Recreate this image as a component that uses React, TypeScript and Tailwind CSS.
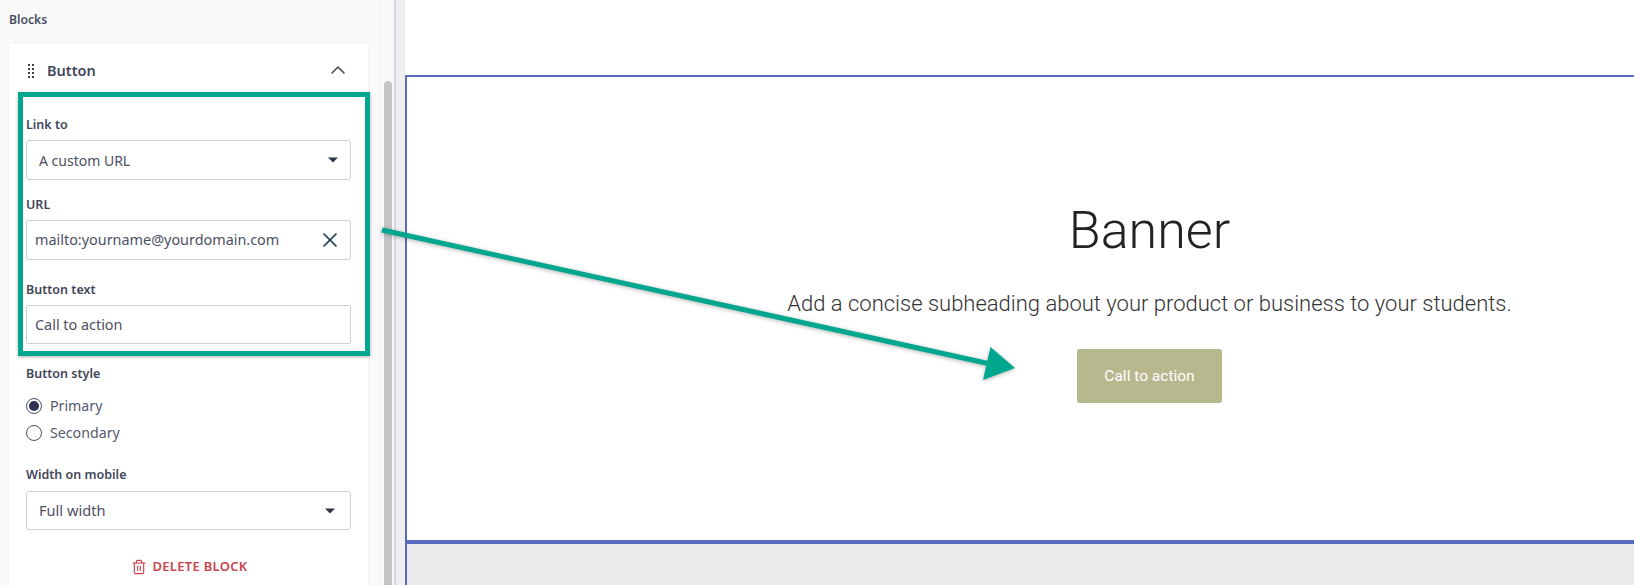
import React from "react";
import { ChevronUp, Trash2, X } from "lucide-react";

const Label = ({ children, className = "" }: { children: React.ReactNode; className?: string }) => (
  <div className={`h-5 text-[12.5px] leading-[20px] font-semibold text-[#42465a] ${className}`}>{children}</div>
);

const Caret = () => (
  <svg width="10" height="6" viewBox="0 0 10 6">
    <path d="M0 0.5h10L5 5.5z" fill="#2f3447" />
  </svg>
);

const SelectBox = ({ value, className = "" }: { value: string; className?: string }) => (
  <div className={`flex items-center justify-between pl-[12px] bg-white border border-[#cfd0d6] rounded-[3px] text-[#4c5062] ${className}`}>
    <span>{value}</span>
    <Caret />
  </div>
);

const Radio = ({ label, checked, className = "" }: { label: string; checked?: boolean; className?: string }) => (
  <div className={`flex items-center h-5 gap-[8px] text-[14.2px] text-[#55596b] ${className}`}>
    <span className="w-4 h-4 rounded-full border border-[#4b4f63] bg-white flex items-center justify-center">
      {checked && <span className="w-[10px] h-[10px] rounded-full bg-[#2f3352]" />}
    </span>
    {label}
  </div>
);

const DragHandle = () => (
  <div className="ml-[2px] grid grid-cols-2 gap-x-[2px] gap-y-[2px] w-[6px]">
    {[0, 1, 2, 3, 4, 5, 6, 7].map((i) => (
      <span key={i} className="w-[2px] h-[2px] bg-[#3a3e50]" />
    ))}
  </div>
);

export default function App() {
  return (
    <div className="relative flex w-[1634px] h-[585px] overflow-hidden bg-white font-['Noto_Sans',sans-serif]">
      {/* Sidebar */}
      <aside className="w-[381px] h-full shrink-0 bg-[#f9f9fa] border-r border-[#ecedf0] pl-[9px]">
        <div className="h-[44px] pt-[10px] text-[12.2px] leading-5 font-semibold text-[#4a4e60]">Blocks</div>
        <div className="w-[359px] h-[600px] bg-white rounded-[3px] shadow-[0_0_3px_rgba(0,0,0,0.06)] pl-[17px]">
          <div className="h-[54px] flex items-center">
            <DragHandle />
            <span className="ml-[13px] text-[14.5px] font-semibold text-[#42465a]">Button</span>
            <ChevronUp className="ml-auto mr-[18px] mb-[2px] w-6 h-6 text-[#3f4356]" strokeWidth={1.5} />
          </div>
          <div className="w-[325px]">
            <Label className="mt-[17px]">Link to</Label>
            <SelectBox value="A custom URL" className="mt-[5px] h-10 pr-[12px] text-[14px]" />
            <Label className="mt-[15px]">URL</Label>
            <div className="mt-[5px] h-10 flex items-center justify-between pl-[8px] pr-[8px] bg-white border border-[#cfd0d6] rounded-[2px] text-[14.4px] text-[#4c5062]">
              <span>mailto:yourname@yourdomain.com</span>
              <X className="w-6 h-6 text-[#1f3a4d]" strokeWidth={1.75} />
            </div>
            <Label className="mt-5">Button text</Label>
            <div className="mt-[5px] h-[39px] flex items-center pl-[8px] bg-white border border-[#cfd0d6] rounded-[2px] text-[14.4px] text-[#4c5062]">
              Call to action
            </div>
            <Label className="mt-5">Button style</Label>
            <Radio label="Primary" checked className="mt-[12px]" />
            <Radio label="Secondary" className="mt-[7px]" />
            <Label className="mt-[22px]">Width on mobile</Label>
            <SelectBox value="Full width" className="mt-[6px] h-[39px] pr-[15px] text-[14.6px]" />
            <div className="mt-[27px] h-5 flex items-center justify-center gap-[5px] pl-[2px] text-[13px] font-semibold tracking-[0.3px] text-[#c8454d]">
              <Trash2 className="w-4 h-4" strokeWidth={1.75} />
              DELETE BLOCK
            </div>
          </div>
        </div>
      </aside>

      {/* Scrollbar */}
      <div className="w-[15px] h-full shrink-0 bg-[#f9f9fa] border-r-2 border-[#d3d5df] pl-[3px] pt-[81px]">
        <div className="w-2 h-full bg-[#c4c4c4] rounded-t-[4px]" />
      </div>

      <div className="w-[9px] h-full shrink-0 bg-[#f0f0f2]" />

      {/* Canvas, wider than the window: its right edge is cut off */}
      <main className="w-[1487px] shrink-0 flex flex-col">
        <div className="h-[75px] bg-white" />
        <section className="h-[469px] bg-white border-t-2 border-l-2 border-b-4 border-[#5b6bbd] flex flex-col items-center font-['Roboto',sans-serif]">
          <h1 className="mt-[122px] text-[52px] leading-[64px] font-light text-[#222222]">Banner</h1>
          <p className="mt-[25px] text-[22px] leading-[32px] font-light text-[#333333]">
            Add a concise subheading about your product or business to your students.
          </p>
          <div className="mt-[29px] pt-[2px] w-[145px] h-[54px] flex items-center justify-center rounded-[3px] bg-[#b8b88f] text-[15.5px] text-white">
            Call to action
          </div>
        </section>
        <div className="flex-1 bg-[#ebebee] border-l-2 border-[#5b6bbd]" />
      </main>

      {/* Screenshot annotation */}
      <div className="absolute left-[18px] top-[92px] w-[352px] h-[264px] border-[5px] border-[#00a78e] shadow-[0_1px_3px_rgba(0,0,0,0.3)]" />
      <svg className="absolute left-0 top-0 pointer-events-none drop-shadow-[0_1px_2px_rgba(0,0,0,0.3)]" width="1634" height="585" viewBox="0 0 1634 585">
        <line x1="382" y1="230" x2="995" y2="365" stroke="#00a78e" strokeWidth="5" />
        <polygon points="990.5,347 1015,368 983,380" fill="#00a78e" />
      </svg>
    </div>
  );
}
